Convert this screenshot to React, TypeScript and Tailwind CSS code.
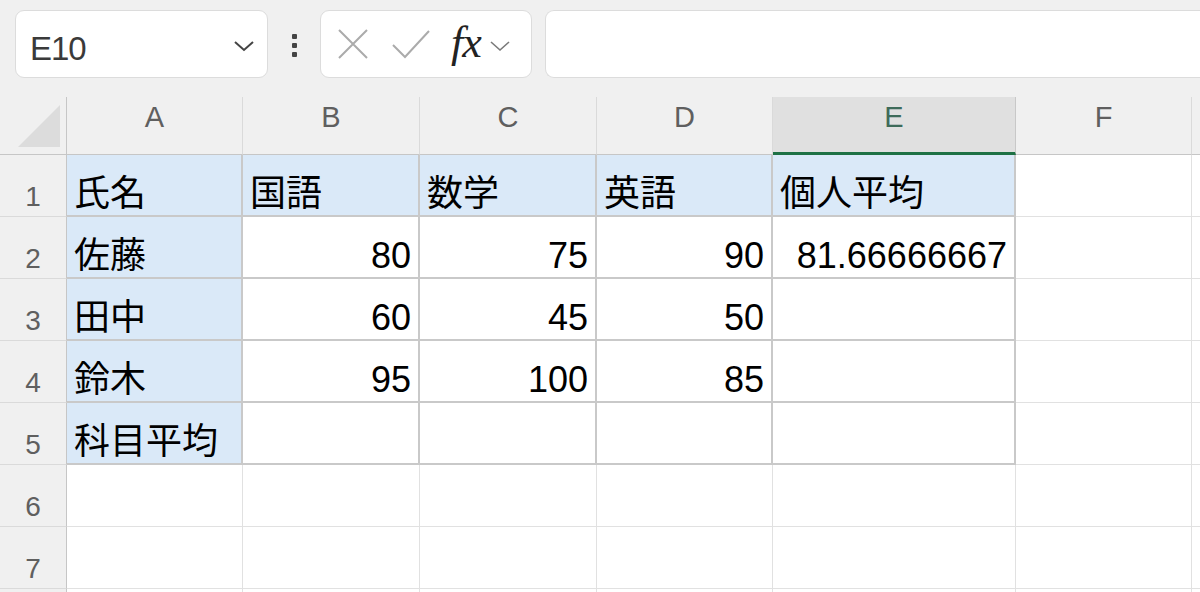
import React from "react";

const colLetters = ["A", "B", "C", "D", "E", "F"];

type CellData = { text?: string; blue?: boolean; right?: boolean; table?: boolean };

const rows: CellData[][] = [
  [
    { text: "氏名", blue: true, table: true },
    { text: "国語", blue: true, table: true },
    { text: "数学", blue: true, table: true },
    { text: "英語", blue: true, table: true },
    { text: "個人平均", blue: true, table: true },
    {},
  ],
  [
    { text: "佐藤", blue: true, table: true },
    { text: "80", right: true, table: true },
    { text: "75", right: true, table: true },
    { text: "90", right: true, table: true },
    { text: "81.66666667", right: true, table: true },
    {},
  ],
  [
    { text: "田中", blue: true, table: true },
    { text: "60", right: true, table: true },
    { text: "45", right: true, table: true },
    { text: "50", right: true, table: true },
    { table: true },
    {},
  ],
  [
    { text: "鈴木", blue: true, table: true },
    { text: "95", right: true, table: true },
    { text: "100", right: true, table: true },
    { text: "85", right: true, table: true },
    { table: true },
    {},
  ],
  [
    { text: "科目平均", blue: true, table: true },
    { table: true },
    { table: true },
    { table: true },
    { table: true },
    {},
  ],
  [{}, {}, {}, {}, {}, {}],
  [{}, {}, {}, {}, {}, {}],
  [{}, {}, {}, {}, {}, {}],
];

function Cell({ c }: { c: CellData }) {
  const border = c.table
    ? "border-r-2 border-b-2 border-[#c9c9c9]"
    : "border-r border-b border-[#e1e1e1]";
  const bg = c.blue ? "bg-[#dae9f8]" : "bg-white";
  return (
    <div
      className={`h-[62px] flex items-end pb-[3px] px-[7px] text-[36px] leading-none text-black overflow-hidden whitespace-nowrap ${border} ${bg} ${
        c.right ? "justify-end" : "justify-start"
      }`}
    >
      {c.text}
    </div>
  );
}

export default function App() {
  return (
    <div className="w-[1200px] h-[592px] overflow-hidden bg-[#f0f0f0] font-['Liberation_Sans','Noto_Sans_CJK_JP',sans-serif]">
      {/* Formula bar */}
      <div className="h-[97px] flex items-start pt-[10px] pl-[15px]">
        <div className="w-[253px] h-[68px] bg-white rounded-[9px] border border-[#dcdcdc] flex items-center justify-between pl-[14px] pr-[12px]">
          <span className="text-[33px] text-[#3a3a3a] pt-[10px] tracking-[-1px]">E10</span>
          <svg width="22" height="14" viewBox="0 0 22 14" className="mt-[4px]">
            <polyline points="2,3 11,11 20,3" fill="none" stroke="#444" strokeWidth="2" />
          </svg>
        </div>
        <div className="w-[52px] h-[68px] flex flex-col items-center justify-center gap-[4px] pt-[2px]">
          <div className="w-[5px] h-[5px] rounded-[1px] bg-[#444]" />
          <div className="w-[5px] h-[5px] rounded-[1px] bg-[#444]" />
          <div className="w-[5px] h-[5px] rounded-[1px] bg-[#444]" />
        </div>
        <div className="w-[212px] h-[68px] bg-white rounded-[9px] border border-[#dcdcdc] flex items-center pl-[16px]">
          <svg width="32" height="32" viewBox="0 0 32 32">
            <path d="M2 2 L30 30 M30 2 L2 30" stroke="#ababab" strokeWidth="2" fill="none" />
          </svg>
          <svg width="40" height="30" viewBox="0 0 40 30" className="ml-[22px]">
            <polyline points="2,16 14,28 38,2" stroke="#ababab" strokeWidth="2" fill="none" />
          </svg>
          <span className="ml-[20px] text-[44px] italic text-[#222] font-['Liberation_Serif',serif] leading-none tracking-[-1px] pb-[2px]">
            fx
          </span>
          <svg width="22" height="14" viewBox="0 0 22 14" className="ml-[8px] mt-[4px]">
            <polyline points="2,3 11,11 20,3" fill="none" stroke="#7a7a7a" strokeWidth="1.6" />
          </svg>
        </div>
        <div className="flex-1 ml-[13px] h-[68px] bg-white rounded-l-[9px] border border-r-0 border-[#dcdcdc]" />
      </div>

      {/* Sheet grid */}
      <div className="grid grid-cols-[67px_176px_177px_177px_176px_243px_176px_1fr]">
        {/* Column headers */}
        <div className="h-[58px] border-r border-b border-[#c6c6c6] bg-[#f0f0f0]">
          <svg width="67" height="58" viewBox="0 0 67 58">
            <polygon points="18,50 60,50 60,8" fill="#dcdcdc" />
          </svg>
        </div>
        {colLetters.map((l) =>
          l === "E" ? (
            <div
              key={l}
              className="h-[58px] bg-[#e0e0e0] border-r border-[#c8c8c8] border-b-[3px] border-b-[#1e7145] flex justify-center pt-[6px] text-[29px] leading-none text-[#3e6b5a]"
            >
              {l}
            </div>
          ) : (
            <div
              key={l}
              className="h-[58px] bg-[#f0f0f0] border-r border-b border-r-[#dadada] border-b-[#c6c6c6] flex justify-center pt-[6px] text-[29px] leading-none text-[#5f5f5f]"
            >
              {l}
            </div>
          )
        )}
        <div className="h-[58px] bg-[#f0f0f0] border-b border-[#c6c6c6]" />

        {rows.map((r, i) => (
          <React.Fragment key={i}>
            <div className="h-[62px] bg-[#f0f0f0] border-r border-b border-r-[#c6c6c6] border-b-[#dadada] flex items-end justify-center pb-[5px] text-[28px] leading-none text-[#5f5f5f]">
              {i < 7 ? i + 1 : ""}
            </div>
            {r.map((c, j) => (
              <Cell key={j} c={c} />
            ))}
            <div className="h-[62px] bg-white border-b border-[#e1e1e1]" />
          </React.Fragment>
        ))}
      </div>
    </div>
  );
}
